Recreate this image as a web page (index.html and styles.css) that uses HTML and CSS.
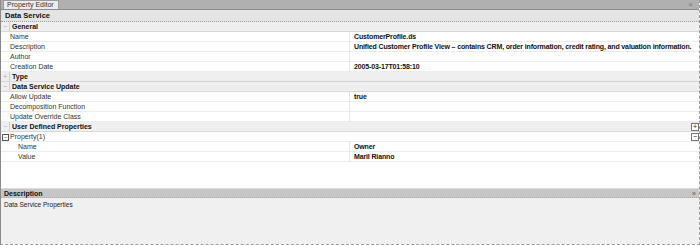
FILE: index.html
```html
<!DOCTYPE html>
<html>
<head>
<meta charset="utf-8">
<link rel="stylesheet" href="styles.css">
</head>
<body>
<div class="panel">
  <div class="tabbar">
    <div class="tab">Property Editor</div>
    <div class="close">×</div>
  </div>
  <div class="title">Data Service</div>
  <div class="grid">
    <div class="group"><span class="tog">−</span><span class="gname">General</span></div>
    <div class="row"><div class="k">Name</div><div class="v">CustomerProfile.ds</div></div>
    <div class="row"><div class="k">Description</div><div class="v">Unified Customer Profile View – contains CRM, order information, credit rating, and valuation information.</div></div>
    <div class="row"><div class="k">Author</div><div class="v"></div></div>
    <div class="row"><div class="k">Creation Date</div><div class="v">2005-03-17T01:58:10</div></div>
    <div class="group"><span class="tog">+</span><span class="gname">Type</span></div>
    <div class="group"><span class="tog">−</span><span class="gname">Data Service Update</span></div>
    <div class="row"><div class="k">Allow Update</div><div class="v">true</div></div>
    <div class="row"><div class="k">Decomposition Function</div><div class="v"></div></div>
    <div class="row"><div class="k">Update Override Class</div><div class="v"></div></div>
    <div class="group"><span class="tog">−</span><span class="gname">User Defined Properties</span><span class="btn">+</span></div>
    <div class="row prop"><div class="k"><span class="box">−</span>Property(1)</div><span class="btn">−</span></div>
    <div class="row"><div class="k sub">Name</div><div class="v">Owner</div></div>
    <div class="row"><div class="k sub">Value</div><div class="v">Maril Rianno</div></div>
  </div>
  <div class="spacer"></div>
  <div class="dhead"><span>Description</span><span class="dicon">»</span></div>
  <div class="dbody">Data Service Properties</div>
</div>
</body>
</html>
```
FILE: styles.css
```css
* { box-sizing: border-box; }
html, body { margin: 0; padding: 0; background: #fff; }
body { font-family: "Liberation Sans", Arial, sans-serif; font-size: 7px; color: #222; }
.panel {
  width: 700px; height: 245px;
  display: flex; flex-direction: column;
  border-left: 1px solid #8a8a8a;
  border-right: 1px dashed #9a9a9a;
  border-bottom: 1px dashed #9a9a9a;
  background: #fff;
}
.tabbar {
  height: 10px; background: #b0b0b0;
  border-bottom: 1px solid #8c8c8c;
  display: flex; align-items: flex-end; justify-content: space-between;
  padding-left: 2px; padding-right: 6px;
}
.tab {
  height: 9px; width: 56px;
  background: #ececec; border: 1px solid #9a9a9a; border-bottom: none;
  font-size: 7px; line-height: 8px; padding-left: 3px; color: #333;
}
.close { font-size: 8px; line-height: 9px; color: #777; }
.title {
  height: 12px; background: #e4e4e4;
  border-bottom: 1px dotted #a0a0a0;
  font-weight: bold; font-size: 7.5px; line-height: 12px; padding-left: 4px; color: #111;
}
.grid { display: flex; flex-direction: column; }
.group {
  height: 10px; background: #efefef;
  border-bottom: 1px solid #d8d8d8;
  display: flex; align-items: center; position: relative;
}
.tog { width: 9px; text-align: center; color: #aaa; font-size: 7px; border-right: 1px solid #d0d0d0; height: 9px; line-height: 9px; }
.gname { font-weight: bold; padding-left: 2px; color: #111; }
.row {
  height: 10px; display: grid; grid-template-columns: 348px 1fr;
  border-bottom: 1px solid #ececec; position: relative;
}
.k { padding-left: 9px; line-height: 10px; color: #333; }
.k.sub { padding-left: 17px; }
.v { border-left: 1px solid #e4e4e4; padding-left: 4px; line-height: 10px; font-weight: bold; color: #111; letter-spacing: -0.14px; white-space: nowrap; }
.prop .k { padding-left: 1px; display: flex; align-items: center; }
.box {
  width: 7px; height: 7px; border: 1px solid #555; display: inline-flex;
  align-items: center; justify-content: center; font-size: 6px; line-height: 5px; margin-right: 1px;
}
.btn {
  position: absolute; right: 0px; top: 1px;
  width: 8px; height: 8px; border: 1px solid #777; background: #fff;
  font-size: 7px; line-height: 6px; text-align: center; color: #222;
}
.spacer { flex: 1; }
.dhead {
  height: 10px; background: #c6c6c6; border-top: 1px solid #dcdcdc;
  border-bottom: 1px dotted #aaa;
  display: flex; justify-content: space-between; align-items: center;
  font-weight: bold; padding-left: 3px; padding-right: 3px; color: #111;
}
.dicon { color: #777; font-size: 7px; }
.dbody { height: 46px; background: #f0f0f0; padding: 3px 0 0 3px; color: #222; font-size: 6.5px; }
```
